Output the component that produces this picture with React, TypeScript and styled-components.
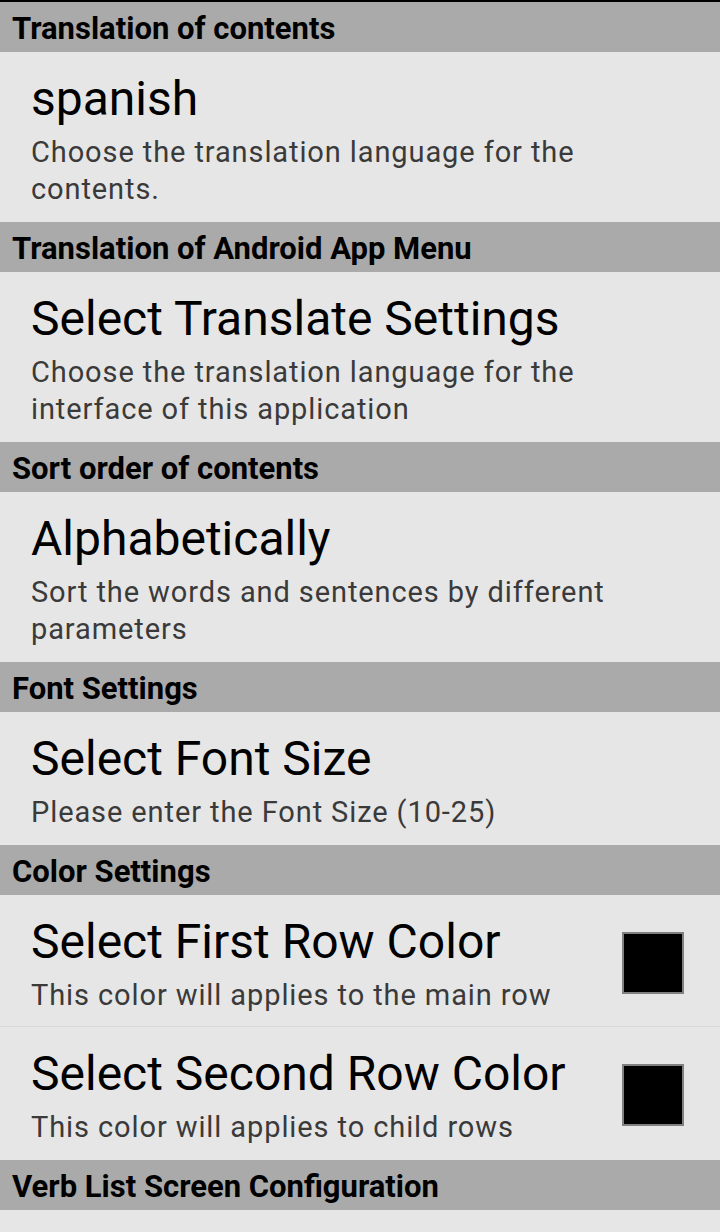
import styled, { createGlobalStyle } from 'styled-components'

const GlobalStyle = createGlobalStyle`
  html, body {
    margin: 0;
    padding: 0;
    background: #e6e6e6;
  }
  body {
    font-family: Roboto, "Noto Sans", "Liberation Sans", sans-serif;
  }
`

const Screen = styled.div`
  width: 720px;
  height: 1232px;
  overflow: hidden;
  background: #e6e6e6;
  border-top: 2px solid #000;
  box-sizing: border-box;
`

const Header = styled.div`
  height: 50px;
  box-sizing: border-box;
  padding: 4px 12px 0;
  background: #aaaaaa;
  color: #000;
  font-size: 31px;
  font-weight: 700;
  line-height: 46px;
  white-space: nowrap;
`

// rows followed by another row in the same section get a thin divider below
const Row = styled.div<{ $divider?: boolean }>`
  display: flex;
  align-items: center;
  padding: 17px 36px ${(p) => (p.$divider ? '12px' : '14px')} 31px;
  border-bottom: ${(p) => (p.$divider ? '1px solid #d9d9d9' : 'none')};
`

const Text = styled.div`
  flex: 1;
  min-width: 0;
`

const Title = styled.div`
  color: #000;
  font-size: 48px;
  line-height: 60px;
  white-space: nowrap;
`

const Summary = styled.div`
  margin-top: 5px;
  color: #3a3a3a;
  font-size: 29px;
  letter-spacing: 0.9px;
  line-height: 37px;
`

const Swatch = styled.div<{ $color: string }>`
  width: 62px;
  height: 62px;
  box-sizing: border-box;
  border: 2px solid #808080;
  background: ${(p) => p.$color};
  flex: none;
`

type Pref = {
  title: string
  summary: string
  swatch?: string
}

type Section = {
  header: string
  prefs: Pref[]
}

const sections: Section[] = [
  {
    header: 'Translation of contents',
    prefs: [
      {
        title: 'spanish',
        summary: 'Choose the translation language for the contents.',
      },
    ],
  },
  {
    header: 'Translation of Android App Menu',
    prefs: [
      {
        title: 'Select Translate Settings',
        summary: 'Choose the translation language for the interface of this application',
      },
    ],
  },
  {
    header: 'Sort order of contents',
    prefs: [
      {
        title: 'Alphabetically',
        summary: 'Sort the words and sentences by different parameters',
      },
    ],
  },
  {
    header: 'Font Settings',
    prefs: [
      {
        title: 'Select Font Size',
        summary: 'Please enter the Font Size (10-25)',
      },
    ],
  },
  {
    header: 'Color Settings',
    prefs: [
      {
        title: 'Select First Row Color',
        summary: 'This color will applies to the main row',
        swatch: '#000',
      },
      {
        title: 'Select Second Row Color',
        summary: 'This color will applies to child rows',
        swatch: '#000',
      },
    ],
  },
  {
    header: 'Verb List Screen Configuration',
    prefs: [],
  },
]

export default function App() {
  return (
    <>
      <GlobalStyle />
      <Screen>
        {sections.map((s) => (
          <div key={s.header}>
            <Header>{s.header}</Header>
            {s.prefs.map((p, i) => (
              <Row key={p.title} $divider={i < s.prefs.length - 1}>
                <Text>
                  <Title>{p.title}</Title>
                  <Summary>{p.summary}</Summary>
                </Text>
                {p.swatch && <Swatch $color={p.swatch} />}
              </Row>
            ))}
          </div>
        ))}
      </Screen>
    </>
  )
}
